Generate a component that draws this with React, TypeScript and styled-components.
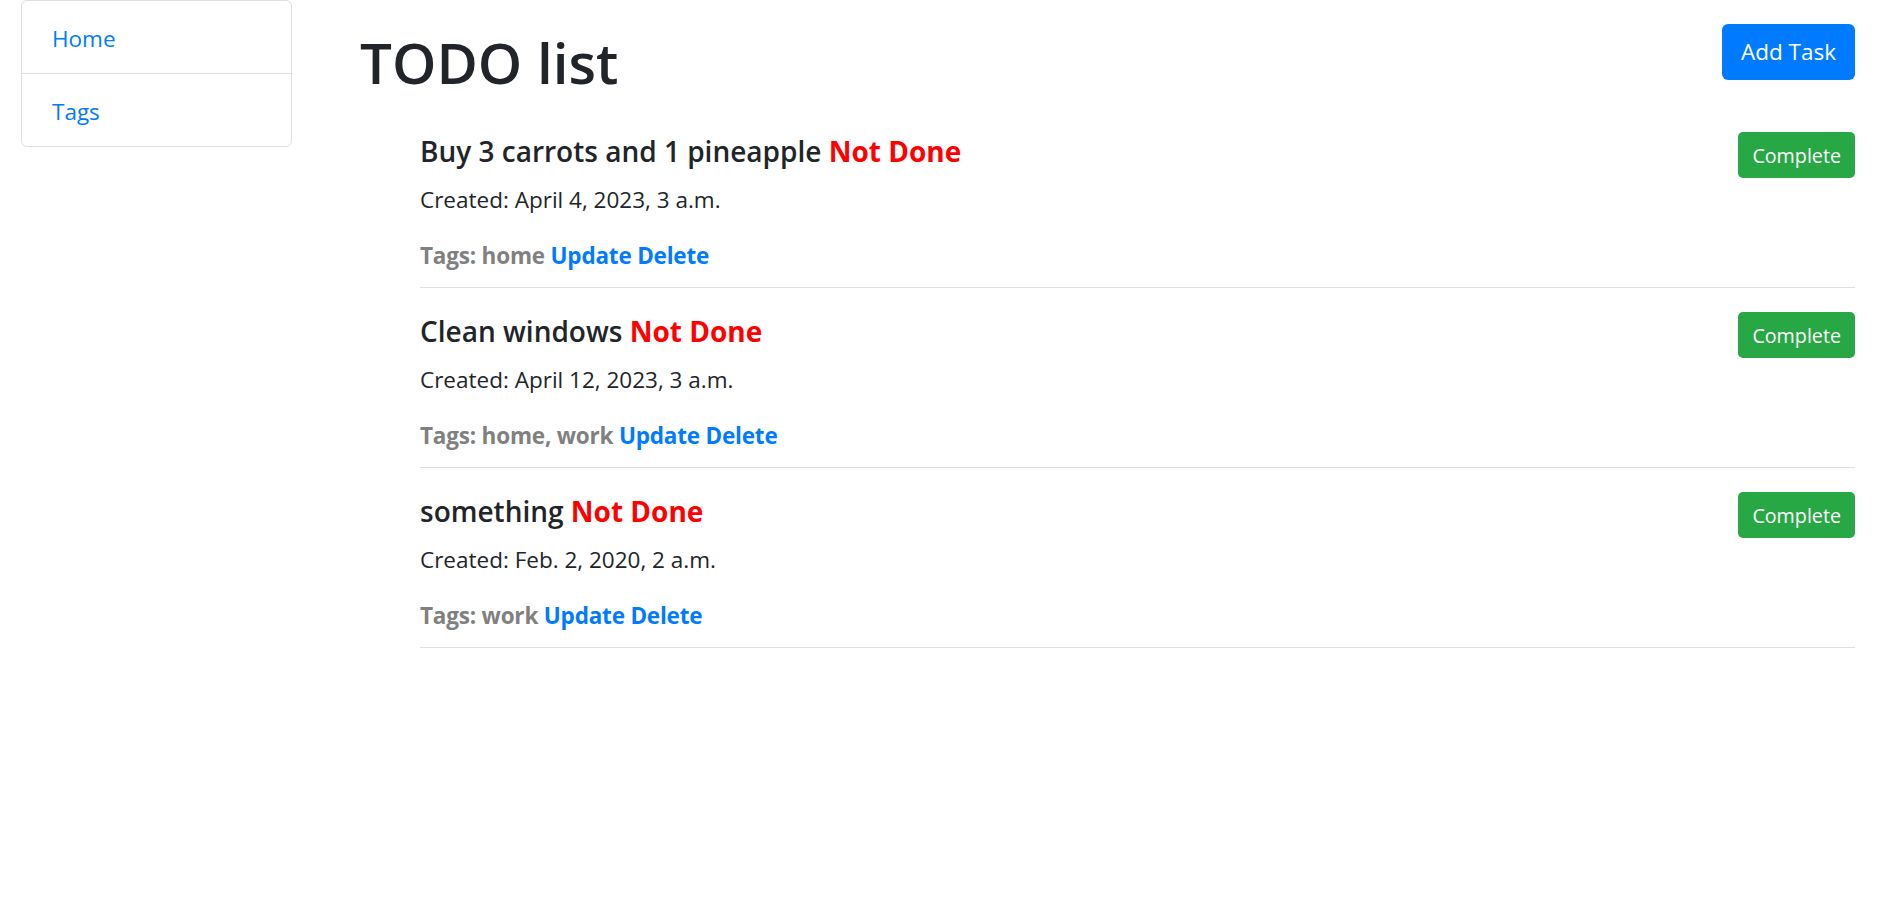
import React from "react";
import styled, { createGlobalStyle } from "styled-components";

const GlobalStyle = createGlobalStyle`
  html, body {
    margin: 0;
    padding: 0;
    background: #ffffff;
  }
  body {
    font-family: "Open Sans", "Liberation Sans", sans-serif;
    color: #212529;
    font-size: 22.5px;
    line-height: 36px;
  }
  * { box-sizing: border-box; }
`;

const Page = styled.div`
  display: flex;
  align-items: flex-start;
  padding: 0 36px 0 21px;
  min-height: 907px;
`;

const Sidebar = styled.nav`
  width: 271px;
  flex: none;
  display: flex;
  flex-direction: column;
  border: 1px solid #dfdfdf;
  border-radius: 6px;
`;

const NavItem = styled.a`
  display: block;
  padding: 20px 30px 16px;
  font-size: 22.5px;
  line-height: 36px;
  color: #007bff;
  text-decoration: none;
  & + & {
    border-top: 1px solid #dfdfdf;
  }
`;

const Main = styled.main`
  flex: 1;
  min-width: 0;
  margin-left: 68px;
`;

const Header = styled.header`
  display: flex;
  justify-content: space-between;
  align-items: flex-start;
  padding-top: 24px;
  margin-bottom: 6px;
`;

const PageTitle = styled.h1`
  margin: 0;
  font-size: 56.5px;
  font-weight: 600;
  line-height: 78px;
`;

const Button = styled.button<{ $variant: "primary" | "success"; $small?: boolean }>`
  flex: none;
  display: inline-flex;
  align-items: center;
  justify-content: center;
  border: none;
  font-family: inherit;
  color: #ffffff;
  cursor: pointer;
  background: ${(p) => (p.$variant === "primary" ? "#007bff" : "#28a745")};
  height: ${(p) => (p.$small ? "46px" : "56px")};
  padding: ${(p) => (p.$small ? "0 14px" : "0 19px")};
  font-size: ${(p) => (p.$small ? "19.7px" : "22.5px")};
  line-height: ${(p) => (p.$small ? "31px" : "36px")};
  border-radius: ${(p) => (p.$small ? "5px" : "6px")};
`;

const TaskList = styled.ul`
  list-style: none;
  margin: 0;
  padding: 0 0 0 60px;
`;

const TaskItem = styled.li`
  padding: 24px 0 13px;
  border-bottom: 1px solid #dfdfdf;
`;

const TaskHead = styled.div`
  display: flex;
  justify-content: space-between;
  align-items: flex-start;
  height: 38px;
  margin-bottom: 12px;
`;

const TaskTitle = styled.h5`
  margin: 0;
  font-size: 28px;
  font-weight: 600;
  line-height: 38px;
`;

const Status = styled.span`
  color: #ff0000;
  font-weight: 700;
`;

const Created = styled.p`
  margin: 0 0 20px;
  line-height: 36px;
`;

const Tags = styled.p`
  margin: 0;
  line-height: 36px;
  font-weight: 700;
  letter-spacing: -0.2px;
  color: #808080;
`;

const ActionLink = styled.a`
  color: #007bff;
  text-decoration: none;
`;

type Task = { title: string; created: string; tags: string };

const tasks: Task[] = [
  { title: "Buy 3 carrots and 1 pineapple", created: "April 4, 2023, 3 a.m.", tags: "home" },
  { title: "Clean windows", created: "April 12, 2023, 3 a.m.", tags: "home, work" },
  { title: "something", created: "Feb. 2, 2020, 2 a.m.", tags: "work" },
];

export default function App() {
  return (
    <>
      <GlobalStyle />
      <Page>
        <Sidebar>
          <NavItem href="#">Home</NavItem>
          <NavItem href="#">Tags</NavItem>
        </Sidebar>
        <Main>
          <Header>
            <PageTitle>TODO list</PageTitle>
            <Button $variant="primary">Add Task</Button>
          </Header>
          <TaskList>
            {tasks.map((t) => (
              <TaskItem key={t.title}>
                <TaskHead>
                  <TaskTitle>
                    {t.title} <Status>Not Done</Status>
                  </TaskTitle>
                  <Button $variant="success" $small>
                    Complete
                  </Button>
                </TaskHead>
                <Created>Created: {t.created}</Created>
                <Tags>
                  Tags: {t.tags} <ActionLink href="#">Update</ActionLink>{" "}
                  <ActionLink href="#">Delete</ActionLink>
                </Tags>
              </TaskItem>
            ))}
          </TaskList>
        </Main>
      </Page>
    </>
  );
}
